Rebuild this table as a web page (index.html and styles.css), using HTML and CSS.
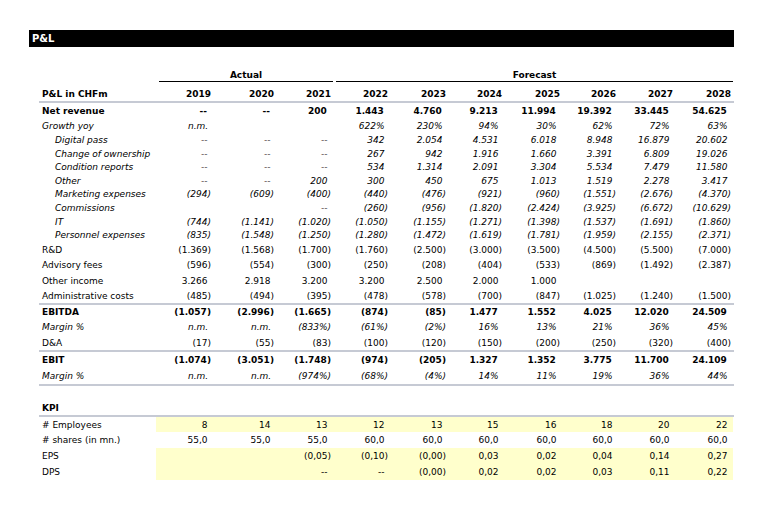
FILE: index.html
```html
<!DOCTYPE html>
<html>
<head>
<meta charset="utf-8">
<title>P&amp;L</title>
<link rel="stylesheet" href="styles.css">
</head>
<body>
<div class="sheet">
  <div class="title">P&amp;L</div>
  <div class="tbl">
    <div class="row group">
      <div class="g actual">Actual</div>
      <div class="g forecast">Forecast</div>
    </div>
    <div class="row head">
      <div class="lab">P&amp;L in CHFm</div>
      <div>2019</div><div>2020</div><div>2021</div><div class="sp"></div>
      <div>2022</div><div>2023</div><div>2024</div><div>2025</div><div>2026</div><div>2027</div><div>2028</div>
    </div>

    <div class="row h15 b">
      <div class="lab">Net revenue</div>
      <div class="p">--</div><div class="p">--</div><div class="p">200</div><div class="sp"></div>
      <div class="p">1.443</div><div class="p">4.760</div><div class="p">9.213</div><div class="p">11.994</div><div class="p">19.392</div><div class="p">33.445</div><div class="p">54.625</div>
    </div>
    <div class="row h15 i">
      <div class="lab">Growth yoy</div>
      <div class="q">n.m.</div><div></div><div></div><div class="sp"></div>
      <div class="p">622%</div><div class="p">230%</div><div class="p">94%</div><div class="p">30%</div><div class="p">62%</div><div class="p">72%</div><div class="p">63%</div>
    </div>
    <div class="row h14 i ind">
      <div class="lab">Digital pass</div>
      <div class="p">--</div><div class="p">--</div><div class="p">--</div><div class="sp"></div>
      <div class="p">342</div><div class="p">2.054</div><div class="p">4.531</div><div class="p">6.018</div><div class="p">8.948</div><div class="p">16.879</div><div class="p">20.602</div>
    </div>
    <div class="row h13 i ind">
      <div class="lab">Change of ownership</div>
      <div class="p">--</div><div class="p">--</div><div class="p">--</div><div class="sp"></div>
      <div class="p">267</div><div class="p">942</div><div class="p">1.916</div><div class="p">1.660</div><div class="p">3.391</div><div class="p">6.809</div><div class="p">19.026</div>
    </div>
    <div class="row h14 i ind">
      <div class="lab">Condition reports</div>
      <div class="p">--</div><div class="p">--</div><div class="p">--</div><div class="sp"></div>
      <div class="p">534</div><div class="p">1.314</div><div class="p">2.091</div><div class="p">3.304</div><div class="p">5.534</div><div class="p">7.479</div><div class="p">11.580</div>
    </div>
    <div class="row h13 i ind">
      <div class="lab">Other</div>
      <div class="p">--</div><div class="p">--</div><div class="p">200</div><div class="sp"></div>
      <div class="p">300</div><div class="p">450</div><div class="p">675</div><div class="p">1.013</div><div class="p">1.519</div><div class="p">2.278</div><div class="p">3.417</div>
    </div>
    <div class="row h14 i ind">
      <div class="lab">Marketing expenses</div>
      <div>(294)</div><div>(609)</div><div>(400)</div><div class="sp"></div>
      <div>(440)</div><div>(476)</div><div>(921)</div><div>(960)</div><div>(1.551)</div><div>(2.676)</div><div>(4.370)</div>
    </div>
    <div class="row h14 i ind">
      <div class="lab">Commissions</div>
      <div></div><div></div><div class="p">--</div><div class="sp"></div>
      <div>(260)</div><div>(956)</div><div>(1.820)</div><div>(2.424)</div><div>(3.925)</div><div>(6.672)</div><div>(10.629)</div>
    </div>
    <div class="row h13 i ind">
      <div class="lab">IT</div>
      <div>(744)</div><div>(1.141)</div><div>(1.020)</div><div class="sp"></div>
      <div>(1.050)</div><div>(1.155)</div><div>(1.271)</div><div>(1.398)</div><div>(1.537)</div><div>(1.691)</div><div>(1.860)</div>
    </div>
    <div class="row h14 i ind">
      <div class="lab">Personnel expenses</div>
      <div>(835)</div><div>(1.548)</div><div>(1.250)</div><div class="sp"></div>
      <div>(1.280)</div><div>(1.472)</div><div>(1.619)</div><div>(1.781)</div><div>(1.959)</div><div>(2.155)</div><div>(2.371)</div>
    </div>
    <div class="row h15">
      <div class="lab">R&amp;D</div>
      <div>(1.369)</div><div>(1.568)</div><div>(1.700)</div><div class="sp"></div>
      <div>(1.760)</div><div>(2.500)</div><div>(3.000)</div><div>(3.500)</div><div>(4.500)</div><div>(5.500)</div><div>(7.000)</div>
    </div>
    <div class="row h15">
      <div class="lab">Advisory fees</div>
      <div>(596)</div><div>(554)</div><div>(300)</div><div class="sp"></div>
      <div>(250)</div><div>(208)</div><div>(404)</div><div>(533)</div><div>(869)</div><div>(1.492)</div><div>(2.387)</div>
    </div>
    <div class="row h17">
      <div class="lab">Other income</div>
      <div class="p">3.266</div><div class="p">2.918</div><div class="p">3.200</div><div class="sp"></div>
      <div class="p">3.200</div><div class="p">2.500</div><div class="p">2.000</div><div class="p">1.000</div><div></div><div></div><div></div>
    </div>
    <div class="row h14 line">
      <div class="lab">Administrative costs</div>
      <div>(485)</div><div>(494)</div><div>(395)</div><div class="sp"></div>
      <div>(478)</div><div>(578)</div><div>(700)</div><div>(847)</div><div>(1.025)</div><div>(1.240)</div><div>(1.500)</div>
    </div>
    <div class="row h14 b">
      <div class="lab">EBITDA</div>
      <div>(1.057)</div><div>(2.996)</div><div>(1.665)</div><div class="sp"></div>
      <div>(874)</div><div>(85)</div><div class="p">1.477</div><div class="p">1.552</div><div class="p">4.025</div><div class="p">12.020</div><div class="p">24.509</div>
    </div>
    <div class="row h16 i">
      <div class="lab">Margin %</div>
      <div class="q">n.m.</div><div class="q">n.m.</div><div>(833%)</div><div class="sp"></div>
      <div>(61%)</div><div>(2%)</div><div class="p">16%</div><div class="p">13%</div><div class="p">21%</div><div class="p">36%</div><div class="p">45%</div>
    </div>
    <div class="row h15 line">
      <div class="lab">D&amp;A</div>
      <div>(17)</div><div>(55)</div><div>(83)</div><div class="sp"></div>
      <div>(100)</div><div>(120)</div><div>(150)</div><div>(200)</div><div>(250)</div><div>(320)</div><div>(400)</div>
    </div>
    <div class="row h15 b">
      <div class="lab">EBIT</div>
      <div>(1.074)</div><div>(3.051)</div><div>(1.748)</div><div class="sp"></div>
      <div>(974)</div><div>(205)</div><div class="p">1.327</div><div class="p">1.352</div><div class="p">3.775</div><div class="p">11.700</div><div class="p">24.109</div>
    </div>
    <div class="row h17 i line">
      <div class="lab">Margin %</div>
      <div class="q">n.m.</div><div class="q">n.m.</div><div>(974%)</div><div class="sp"></div>
      <div>(68%)</div><div>(4%)</div><div class="p">14%</div><div class="p">11%</div><div class="p">19%</div><div class="p">36%</div><div class="p">44%</div>
    </div>

    <div class="row kpi line">
      <div class="lab">KPI</div>
    </div>
    <div class="row h15 y">
      <div class="lab"># Employees</div>
      <div class="p">8</div><div class="p">14</div><div class="p">13</div><div class="sp"></div>
      <div class="p">12</div><div class="p">13</div><div class="p">15</div><div class="p">16</div><div class="p">18</div><div class="p">20</div><div class="p">22</div>
    </div>
    <div class="row h16">
      <div class="lab"># shares (in mn.)</div>
      <div class="p">55,0</div><div class="p">55,0</div><div class="p">55,0</div><div class="sp"></div>
      <div class="p">60,0</div><div class="p">60,0</div><div class="p">60,0</div><div class="p">60,0</div><div class="p">60,0</div><div class="p">60,0</div><div class="p">60,0</div>
    </div>
    <div class="row h16 y">
      <div class="lab">EPS</div>
      <div></div><div></div><div>(0,05)</div><div class="sp"></div>
      <div>(0,10)</div><div>(0,00)</div><div class="p">0,03</div><div class="p">0,02</div><div class="p">0,04</div><div class="p">0,14</div><div class="p">0,27</div>
    </div>
    <div class="row h16 y">
      <div class="lab">DPS</div>
      <div></div><div></div><div class="p">--</div><div class="sp"></div>
      <div class="p">--</div><div>(0,00)</div><div class="p">0,02</div><div class="p">0,02</div><div class="p">0,03</div><div class="p">0,11</div><div class="p">0,22</div>
    </div>
  </div>
</div>
</body>
</html>
```
FILE: styles.css
```css
html, body {
  margin: 0;
  background: #ffffff;
}

body {
  padding: 30px 0 0 29px;
  font-family: "DejaVu Sans", Verdana, sans-serif;
  font-size: 9px;
  color: #000000;
}

.sheet {
  width: 705px;
}

.title {
  height: 17px;
  line-height: 17px;
  background: #000000;
  color: #ffffff;
  font-weight: bold;
  font-size: 10px;
  padding-left: 3px;
}

.tbl {
  width: 695px;
  margin: 20px 0 0 10px;
}

.row {
  display: grid;
  grid-template-columns: 117px 57px 63px 57px 3px 54px 58px 56px 58px 56px 57px 58px;
}

.row > div {
  text-align: right;
  padding-right: 2px;
  white-space: nowrap;
}

.row > .lab {
  text-align: left;
  padding-left: 3px;
  padding-right: 0;
}

.row > .sp {
  padding-right: 0;
}

.ind > .lab {
  padding-left: 16px;
}

.p::after {
  content: ")";
  visibility: hidden;
}

.q::after {
  content: ".";
  visibility: hidden;
}

.b { font-weight: bold; }
.i { font-style: italic; }

.h13 > div { padding-top: 1px; line-height: 12px; }
.h14 > div { padding-top: 1px; line-height: 13px; }
.h15 > div { padding-top: 1px; line-height: 14px; }
.h16 > div { padding-top: 1px; line-height: 15px; }
.h17 > div { padding-top: 1px; line-height: 16px; }

.line {
  border-bottom: 2px solid #c6cad4;
}

.group {
  font-weight: bold;
}

.group > .g {
  text-align: center;
  padding: 2px 0 0;
  line-height: 12px;
  border-bottom: 1px solid #000000;
}

.group > .actual {
  grid-column: 2 / 5;
  margin-left: 3px;
}

.group > .forecast {
  grid-column: 6 / 13;
}

.head {
  font-weight: bold;
  border-bottom: 2px solid #c6cad4;
}

.head > div {
  padding-top: 6px;
  padding-bottom: 1px;
  line-height: 12px;
}

.kpi {
  margin-top: 14px;
  font-weight: bold;
}

.kpi > div {
  padding-top: 1px;
  line-height: 14px;
}

.y > div:not(.lab) {
  background: #ffffcc;
}
```
